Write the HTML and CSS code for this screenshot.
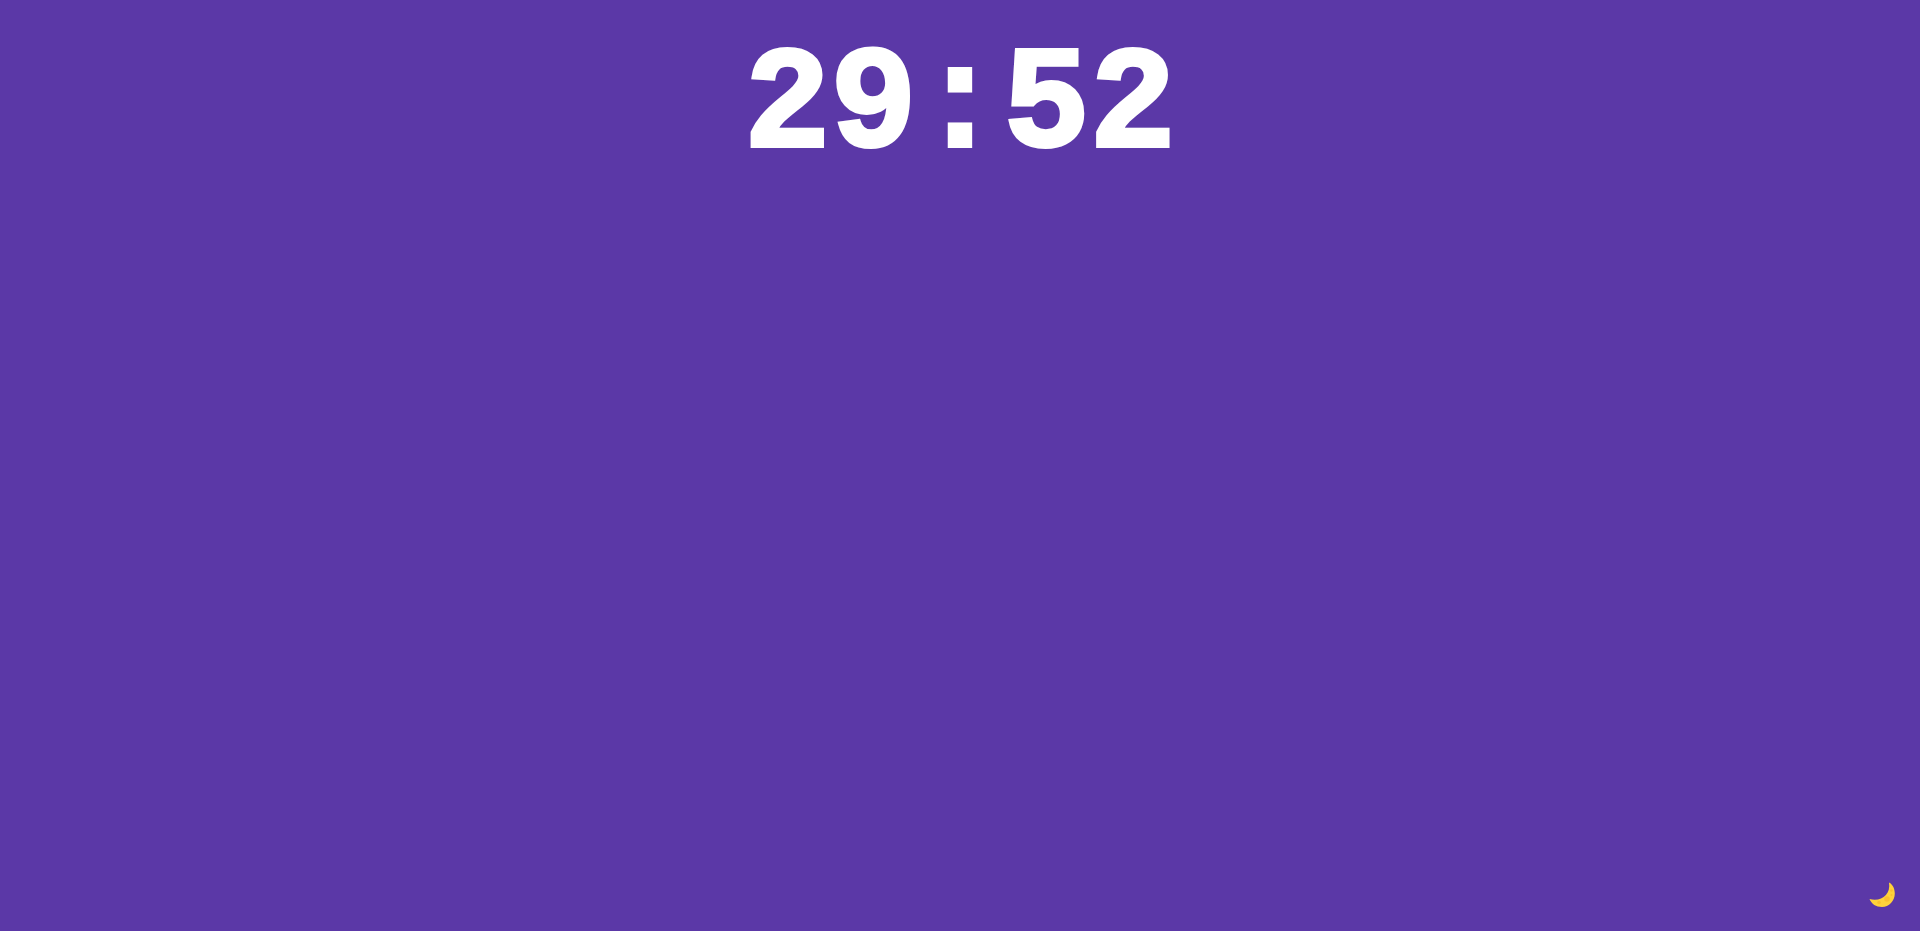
FILE: index.html
```html
<!DOCTYPE html>
<html lang="en">
<head>
<meta charset="utf-8">
<title>Timer</title>
<link rel="stylesheet" href="styles.css">
</head>
<body>
<main class="timer"><time class="time" datetime="PT29M52S">29:52</time></main>
<button class="theme" type="button" aria-label="Dark mode">
<svg class="moon" viewBox="0 0 26 26" aria-hidden="true"><path fill="#ffd23a" d="M20 0.500C24 2.500 25.800 7 25.800 11.500C25.800 19 20 25 13 25C7 25 2.500 22 0.500 17C12 20 22 13 20 0.500Z"/><g fill="#fbbf2f"><circle cx="18" cy="17" r="2.800"/><circle cx="10" cy="20.500" r="1.800"/><circle cx="22.500" cy="8.500" r="1.200"/><circle cx="22.500" cy="13" r="1"/></g></svg>
</button>
</body>
</html>
```
FILE: styles.css
```css
* { box-sizing: border-box; }
body {
  margin: 0;
  min-height: 100vh;
  display: flex;
  flex-direction: column;
  justify-content: space-between;
  background: #5b38a7;
  color: #fff;
}
.timer { display: flex; justify-content: center; padding-top: 18px; }
.time {
  font: bold 144px/180px "Liberation Mono", monospace;
  -webkit-text-stroke: 4px #fff;
}
.theme {
  align-self: flex-end;
  margin: 0 25px 23px 0;
  padding: 0;
  border: 0;
  background: none;
  cursor: pointer;
}
.moon { display: block; width: 26px; height: 26px; }
```
